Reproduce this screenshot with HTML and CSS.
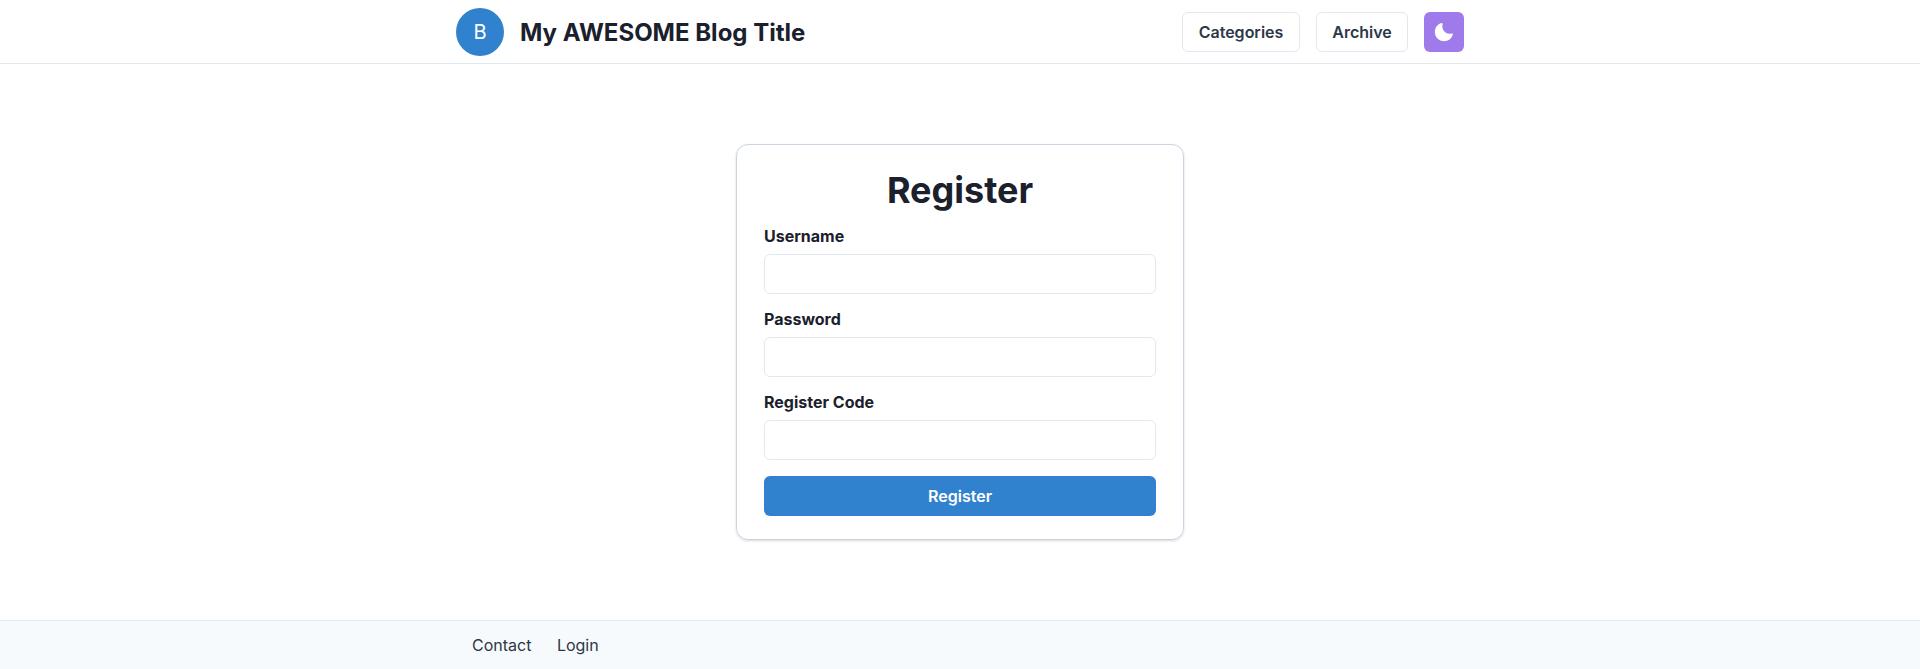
FILE: index.html
```html
<!DOCTYPE html>
<html lang="en">
<head>
<meta charset="utf-8">
<title>My AWESOME Blog Title</title>
<link rel="stylesheet" href="styles.css">
</head>
<body>
<header class="header">
  <div class="container header-inner">
    <div class="avatar">B</div>
    <a class="brand">My AWESOME Blog Title</a>
    <nav class="nav">
      <button class="btn outline categories">Categories</button>
      <button class="btn outline archive">Archive</button>
      <button class="btn toggle" aria-label="Toggle theme"><svg width="20" height="20" viewBox="0 0 24 24"><path fill="currentColor" d="M21.4,13.7C20.6,13.9,19.8,14,19,14c-5,0-9-4-9-9c0-0.8,0.1-1.6,0.3-2.4c0.1-0.3,0-0.7-0.3-1 c-0.3-0.3-0.6-0.4-1-0.3C4.3,2.7,1,7.1,1,12c0,6.1,4.9,11,11,11c4.9,0,9.3-3.3,10.6-8.1c0.1-0.3,0-0.7-0.3-1 C22.1,13.7,21.7,13.6,21.4,13.7z"/></svg></button>
    </nav>
  </div>
</header>
<main class="main">
  <form class="card">
    <h2 class="title">Register</h2>
    <label class="field">Username<input class="input" type="text"></label>
    <label class="field">Password<input class="input" type="password"></label>
    <label class="field">Register Code<input class="input" type="text"></label>
    <button class="btn submit" type="button">Register</button>
  </form>
</main>
<footer class="footer">
  <div class="container footer-inner"><a>Contact</a><a>Login</a></div>
</footer>
</body>
</html>
```
FILE: styles.css
```css
* { box-sizing: border-box; }
body {
  margin: 0;
  height: 669px;
  display: flex;
  flex-direction: column;
  overflow: hidden;
  font: 400 16px/24px Inter, sans-serif;
  color: #1a202c;
  background: #fff;
}
.header { height: 64px; flex: none; border-bottom: 1px solid #e2e8f0; }
.container { width: 1008px; margin: 0 auto; }
.header-inner { height: 64px; display: flex; align-items: center; }
.avatar {
  width: 48px; height: 48px; border-radius: 50%;
  background: #3182ce; color: #fff;
  display: flex; align-items: center; justify-content: center;
  font-size: 20px;
}
.brand { margin-left: 16px; padding-top: 2px; font-size: 24px; line-height: 32px; font-weight: 700; }
.nav { margin-left: auto; display: flex; gap: 16px; }
.btn {
  height: 40px; padding: 1px 0 0; border: 0; border-radius: 6px;
  font: 600 16px/19px Inter, sans-serif;
}
.outline { border: 1px solid #e2e8f0; background: #fff; color: #2d3748; }
.categories { width: 118px; }
.archive { width: 92px; }
.toggle {
  width: 40px; padding: 0; background: #9f7aea; color: #fff;
  display: flex; align-items: center; justify-content: center;
}
.main { flex: 1; display: flex; justify-content: center; align-items: flex-start; padding-top: 80px; }
.card {
  width: 448px; height: 396px; padding: 24px 27px 23px;
  display: flex; flex-direction: column; gap: 16px;
  border: 1px solid #cbd5e0; border-radius: 12px;
  box-shadow: 0 1px 3px rgba(0,0,0,.1), 0 1px 2px rgba(0,0,0,.06);
}
.title { margin: 0 0 -1px; font-size: 36px; line-height: 43px; font-weight: 700; text-align: center; }
.field { display: flex; flex-direction: column; gap: 8px; line-height: 19px; font-weight: 700; }
.input { width: 100%; height: 40px; padding: 0 16px; border: 1px solid #e2e8f0; border-radius: 6px; background: #fff; }
.submit { width: 100%; flex: none; background: #3182ce; color: #fff; }
.footer { height: 49px; flex: none; border-top: 1px solid #e2e8f0; background: #f7fafc; color: #2d3748; }
.footer-inner { padding: 12px 16px; display: flex; gap: 25.5px; }
```
